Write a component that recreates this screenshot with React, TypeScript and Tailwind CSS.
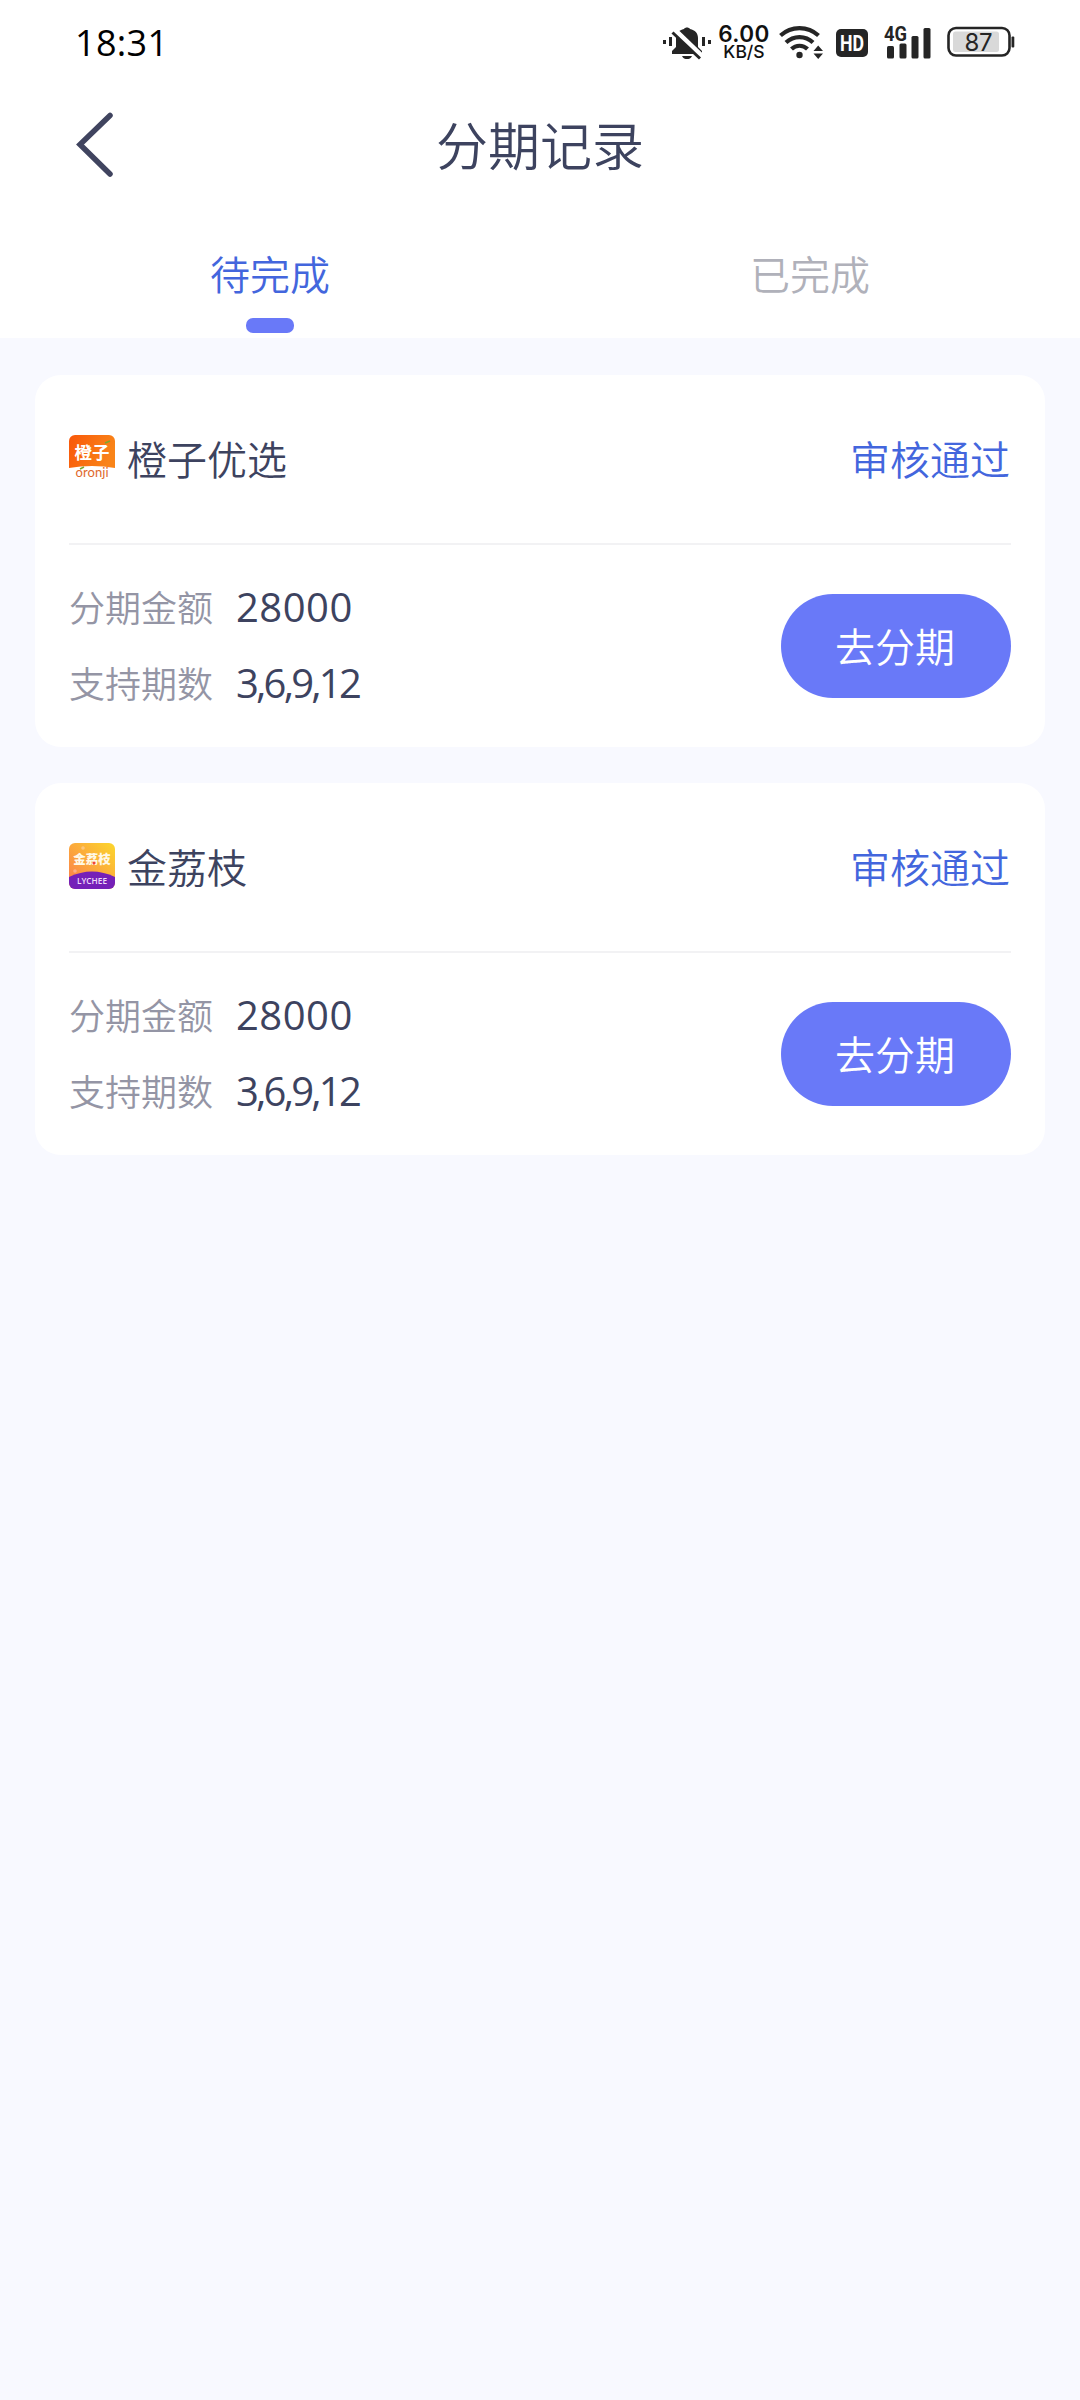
type Installment = {
  id: number
  name: string
  status: string
  amount: string
  periods: string
}

const installments: Installment[] = [
  { id: 1, name: '橙子优选', status: '审核通过', amount: '28000', periods: '3,6,9,12' },
  { id: 2, name: '金荔枝', status: '审核通过', amount: '28000', periods: '3,6,9,12' },
]

const MutedBell = () => (
  <svg width="50" height="36" viewBox="0 0 50 36" fill="#252525">
    <rect x="0" y="16" width="3" height="4" />
    <rect x="6" y="13" width="3" height="9" />
    <rect x="39" y="13" width="3" height="9" />
    <rect x="45" y="16" width="3" height="4" />
    <path d="M9 30v-3l4-4v-9c0-5 3-8 8-9 1-2 5-2 6 0 5 1 8 4 8 9v9l4 4v3z" />
    <path d="M19 32h10c-1 2.500-3 3-5 3s-4-.5-5-3z" />
    <path d="M11.500 6l28 27" stroke="#fff" strokeWidth="5.500" />
    <path d="M9.500 8.500l27.500 26" stroke="#252525" strokeWidth="3" />
  </svg>
)

const WifiSignal = () => (
  <svg width="44" height="36" viewBox="0 0 44 36" fill="none" stroke="#252525" strokeWidth="4.200">
    <path d="M1.500 11.500a28 28 0 0 1 38 0" />
    <path d="M7 18.500a19.500 19.500 0 0 1 27 0" />
    <path d="M12.500 25a11.500 11.500 0 0 1 16 0" />
    <circle cx="20.500" cy="31" r="3.200" fill="#252525" stroke="none" />
    <path d="M34.500 27l4.700-5.500L44 27zM34.500 29.500l4.700 5.500L44 29.500z" fill="#252525" stroke="none" />
  </svg>
)

const HdBadge = () => (
  <svg width="32" height="28" viewBox="0 0 32 28">
    <rect width="32" height="28" rx="5" fill="#252525" />
    <text x="16" y="21.500" textAnchor="middle" fontSize="21.500" fontWeight="700" fontFamily="Roboto, sans-serif" fill="#fff" textLength="24" lengthAdjust="spacingAndGlyphs">
      HD
    </text>
  </svg>
)

const CellSignal = () => (
  <svg width="48" height="40" viewBox="0 -4 48 40" fill="#252525">
    <text x="0" y="17" fontSize="21" fontWeight="700" fontFamily="Roboto, sans-serif" textLength="23" lengthAdjust="spacingAndGlyphs">
      4G
    </text>
    <rect x="3" y="22" width="7" height="12.500" rx="1.500" />
    <rect x="15.500" y="19.500" width="7" height="15" rx="1.500" />
    <rect x="27.500" y="12" width="7" height="22.500" rx="1.500" />
    <rect x="39.500" y="4" width="7" height="30.500" rx="1.500" />
  </svg>
)

const Battery = () => (
  <svg width="68" height="32" viewBox="0 0 68 32">
    <rect x="1.500" y="2" width="61" height="27.500" rx="7.500" fill="#fff" stroke="#252525" strokeWidth="2.600" />
    <rect x="6" y="5.500" width="46" height="20.500" rx="2.500" fill="#d9d9d9" />
    <rect x="64.500" y="10.500" width="2.800" height="11" rx="1" fill="#252525" />
    <text x="31.500" y="24.500" textAnchor="middle" fontSize="24" fontWeight="400" fontFamily="Inter, sans-serif" fill="#252525" textLength="28">
      87
    </text>
  </svg>
)

const StatusBar = () => (
  <div className="flex h-[84px] items-center pr-[65px] pl-[75px]">
    <span className="relative top-px font-['Open_Sans',sans-serif] text-[36px] leading-none font-medium tracking-[0.300px] text-black">
      18:31
    </span>
    <div className="ml-auto flex items-center">
      <MutedBell />
      <div className="ml-[5px] flex w-[52px] flex-col items-center font-[Inter,sans-serif] text-[#111]">
        <span className="text-[22.500px] leading-[19px] font-semibold tracking-[0.400px]">6.00</span>
        <span className="text-[17.500px] leading-[17px] font-medium">KB/S</span>
      </div>
      <div className="ml-[9px]">
        <WifiSignal />
      </div>
      <div className="mt-[2px] ml-[13px]">
        <HdBadge />
      </div>
      <div className="-mt-[4px] ml-[16px]">
        <CellSignal />
      </div>
      <div className="ml-[15px]">
        <Battery />
      </div>
    </div>
  </div>
)

const NavBar = () => (
  <div className="grid h-[124px] grid-cols-[1fr_auto_1fr] items-center pb-[4px]">
    <button className="w-fit pl-[74px]">
      <svg width="42" height="66" viewBox="0 0 42 66" fill="none" stroke="#40445f" strokeWidth="5.500" strokeLinecap="round">
        <path d="M36 4.500L6 33.500l30 29.500" />
      </svg>
    </button>
    <h1 className="text-[52px] leading-none">分期记录</h1>
  </div>
)

const Tabs = () => (
  <div className="grid h-[130px] grid-cols-2 text-center text-[40px] leading-none">
    <div className="flex flex-col items-center pt-[45px] text-[#4366dd]">
      待完成
      <span className="mt-[25px] h-[15px] w-[48px] rounded-[7px] bg-[#6979f8]" />
    </div>
    <div className="pt-[45px] text-[#b0b1ba]">已完成</div>
  </div>
)

const OrangeLogo = () => (
  <svg width="46" height="46" viewBox="0 0 46 46">
    <defs>
      <linearGradient id="orange" x1="0" y1="0" x2="1" y2="0.300">
        <stop offset="0" stopColor="#f9570a" />
        <stop offset="1" stopColor="#f98418" />
      </linearGradient>
    </defs>
    <path d="M0 33V6a6 6 0 0 1 6-6h34a6 6 0 0 1 6 6v27q-23-4-46 0z" fill="url(#orange)" />
    <text x="23" y="24" textAnchor="middle" fontSize="17.500" fontWeight="700" fill="#fff">
      橙子
    </text>
    <text x="23" y="42" textAnchor="middle" fontSize="13" fontWeight="400" fontFamily="Lato, sans-serif" fill="#e0692c" textLength="33">
      oronji
    </text>
    <path d="M11 34l4-2M36 8l5-2" stroke="#79a830" strokeWidth="1.500" />
  </svg>
)

const LycheeLogo = () => (
  <svg width="46" height="46" viewBox="0 0 46 46">
    <defs>
      <linearGradient id="lychee" x1="0" y1="1" x2="1" y2="0">
        <stop offset="0" stopColor="#fb7a4c" />
        <stop offset="1" stopColor="#fcd72c" />
      </linearGradient>
      <clipPath id="tile">
        <rect width="46" height="46" rx="6" />
      </clipPath>
    </defs>
    <g clipPath="url(#tile)">
      <rect width="46" height="46" fill="url(#lychee)" />
      <circle cx="14" cy="5" r="1.800" fill="#fdc67a" />
      <circle cx="6" cy="28" r="1.800" fill="#fdae83" />
      <path d="M0 34q23-11 46 0v12H0z" fill="#7520b8" />
    </g>
    <text x="23" y="21" textAnchor="middle" fontSize="12.500" fontWeight="900" fill="#fff8e6">
      金荔枝
    </text>
    <circle cx="25" cy="20" r="1.500" fill="#f0443a" />
    <text x="23" y="41" textAnchor="middle" fontSize="9" fontWeight="600" fontFamily="Open Sans, sans-serif" fill="#f0dcfa" textLength="30" lengthAdjust="spacingAndGlyphs">
      LYCHEE
    </text>
  </svg>
)

const Field = ({ label, value }: { label: string; value: string }) => (
  <div className="flex h-[76px] items-center">
    <span className="w-[167px] pb-[5px] text-[36px] leading-none text-[#9495a5]">{label}</span>
    <span
      className={`pb-[2px] font-['Open_Sans',sans-serif] text-[40px] leading-none font-normal ${value.includes(',') ? 'tracking-[-2.800px]' : 'tracking-[0.500px]'}`}
    >
      {value}
    </span>
  </div>
)

const InstallmentCard = ({ item }: { item: Installment }) => (
  <div className="h-[372px] rounded-[26px] bg-white px-[34px]">
    <div className="flex h-[170px] items-center border-b-2 border-[#f2f2f4] pb-[2px] text-[40px] leading-none">
      {item.id === 1 ? <OrangeLogo /> : <LycheeLogo />}
      <span className="ml-[12px] pb-px">{item.name}</span>
      <span className="mr-[1px] ml-auto pb-px text-[#4366dd]">{item.status}</span>
    </div>
    <div className="flex items-center justify-between pt-[25px]">
      <div>
        <Field label="分期金额" value={item.amount} />
        <Field label="支持期数" value={item.periods} />
      </div>
      <button className="h-[104px] w-[230px] rounded-full bg-[#6979f8] pr-[2px] pb-[2px] text-[40px] leading-none text-white">
        去分期
      </button>
    </div>
  </div>
)

export default function App() {
  return (
    <div className="min-h-[2400px] w-[1080px] bg-[#f8f9ff] font-['Noto_Sans_CJK_SC',sans-serif] font-[350] text-[#3d435f]">
      <header className="bg-white">
        <StatusBar />
        <NavBar />
        <Tabs />
      </header>
      <main className="flex flex-col gap-[36px] px-[35px] pt-[37px]">
        {installments.map(item => (
          <InstallmentCard key={item.id} item={item} />
        ))}
      </main>
    </div>
  )
}
